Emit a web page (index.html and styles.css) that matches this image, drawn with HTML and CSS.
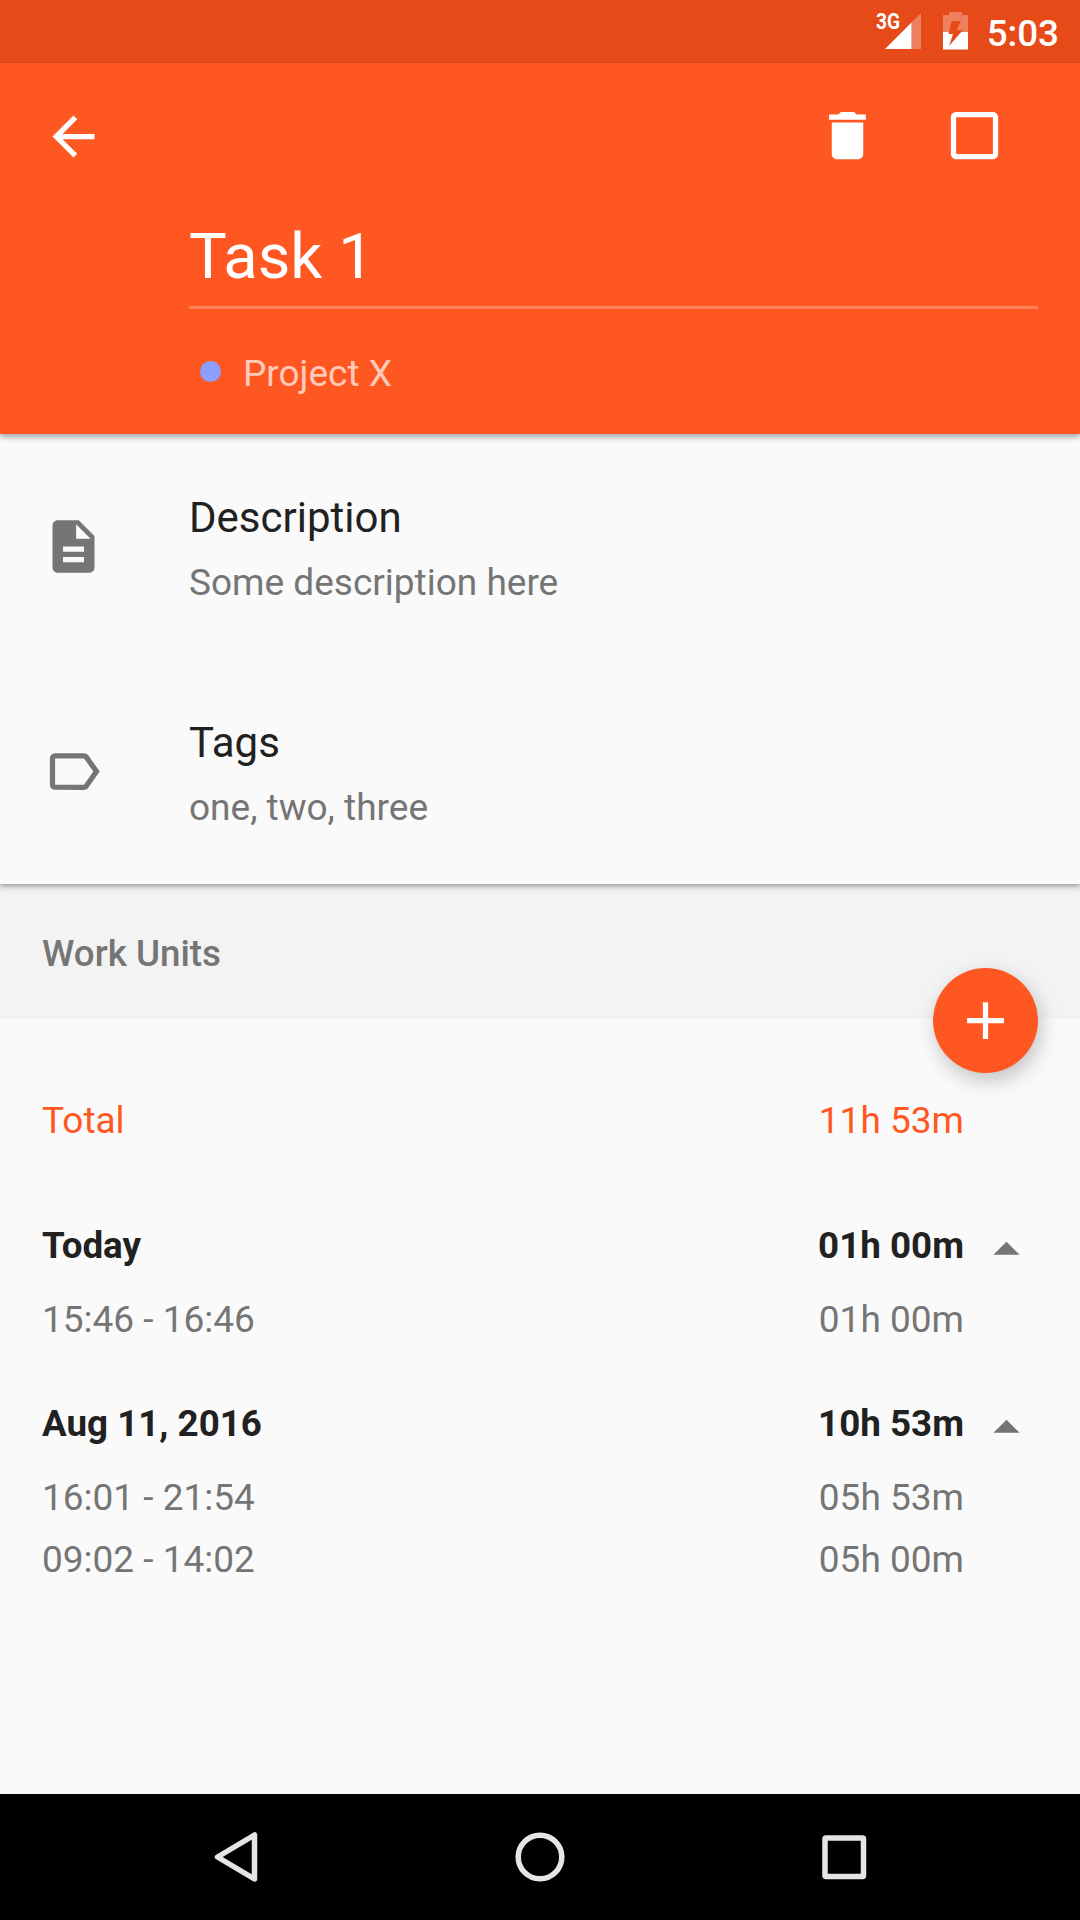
FILE: index.html
```html
<!DOCTYPE html>
<html lang="en">
<head>
  <meta charset="UTF-8" />
  <meta name="viewport" content="width=device-width, initial-scale=1" />
  <title>Task 1</title>
  <link rel="stylesheet" href="styles.css">
</head>
<body>
  <div class="status-bar">
    <div class="signal">
      <span class="network">3G</span>
      <svg width="36" height="36" viewBox="0 0 36 36">
        <path class="dim" d="M26.5 9.5 36 0v36h-9.5z" />
        <path d="M0 36 26.5 9.5V36z" />
      </svg>
    </div>
    <svg class="battery" width="25" height="38" viewBox="0 0 25 38">
      <path class="dim" d="M0 3h6V0h13v3h6v17H0z" />
      <path d="M0 20h25v17.5H0z" />
      <path class="bolt" d="M8.5 9h9.5l-4.5 9H20L6 34l4-12H5.5z" />
    </svg>
    <span class="clock">5:03</span>
  </div>

  <header>
    <div class="toolbar">
      <button class="icon-btn" aria-label="Back">
        <svg class="icon" viewBox="0 0 24 24"><path d="M20 11H7.83l5.59-5.59L12 4l-8 8 8 8 1.41-1.41L7.83 13H20v-2z" /></svg>
      </button>
      <div class="actions">
        <button class="icon-btn" aria-label="Delete">
          <svg class="icon" viewBox="0 0 24 24"><path d="M6 19c0 1.1.9 2 2 2h8c1.1 0 2-.9 2-2V7H6v12zM19 4h-3.5l-1-1h-5l-1 1H5v2h14V4z" /></svg>
        </button>
        <button class="icon-btn" aria-label="Mark as done">
          <svg class="icon" viewBox="0 0 24 24"><path d="M19 5v14H5V5h14m0-2H5c-1.1 0-2 .9-2 2v14c0 1.1.9 2 2 2h14c1.1 0 2-.9 2-2V5c0-1.1-.9-2-2-2z" /></svg>
        </button>
      </div>
    </div>
    <div class="task">
      <h1>Task 1</h1>
      <div class="project"><span class="dot"></span>Project X</div>
    </div>
  </header>

  <section class="details">
    <div class="detail">
      <svg class="icon" viewBox="0 0 24 24"><path d="M14 2H6c-1.1 0-1.99.9-1.99 2L4 20c0 1.1.89 2 1.99 2H18c1.1 0 2-.9 2-2V8l-6-6zm2 16H8v-2h8v2zm0-4H8v-2h8v2zm-3-5V3.5L18.5 9H13z" /></svg>
      <div>
        <h2>Description</h2>
        <p>Some description here</p>
      </div>
    </div>
    <div class="detail">
      <svg class="icon" viewBox="0 0 24 24"><path d="M17.63 5.84C17.27 5.33 16.67 5 16 5L5 5.01C3.9 5.01 3 5.9 3 7v10c0 1.1.9 1.99 2 1.99L16 19c.67 0 1.27-.33 1.63-.84L22 12l-4.37-6.16zM16 17H5V7h11l3.55 5L16 17z" /></svg>
      <div>
        <h2>Tags</h2>
        <p>one, two, three</p>
      </div>
    </div>
  </section>

  <div class="section-header">
    <h3>Work Units</h3>
    <button class="fab" aria-label="Add work unit">
      <svg class="icon" viewBox="0 0 24 24"><path d="M19 13h-6v6h-2v-6H5v-2h6V5h2v6h6v2z" /></svg>
    </button>
  </div>

  <main>
    <div class="row total"><span>Total</span><span>11h 53m</span></div>

    <div class="group">
      <div class="row day">
        <span>Today</span><span>01h 00m</span>
        <svg class="icon" viewBox="0 0 24 24"><path d="M7 14l5-5 5 5z" /></svg>
      </div>
      <div class="row"><span>15:46 - 16:46</span><span>01h 00m</span></div>
    </div>

    <div class="group">
      <div class="row day">
        <span>Aug 11, 2016</span><span>10h 53m</span>
        <svg class="icon" viewBox="0 0 24 24"><path d="M7 14l5-5 5 5z" /></svg>
      </div>
      <div class="row"><span>16:01 - 21:54</span><span>05h 53m</span></div>
      <div class="row"><span>09:02 - 14:02</span><span>05h 00m</span></div>
    </div>
  </main>

  <nav>
    <svg viewBox="0 0 60 60"><path d="M48.5 8v44L11.5 30z" /></svg>
    <svg viewBox="0 0 60 60"><circle cx="30" cy="30" r="21.8" /></svg>
    <svg viewBox="0 0 60 60"><rect x="11" y="11" width="38.5" height="38.5" rx="1" /></svg>
  </nav>
</body>
</html>
```
FILE: styles.css
```css
* {
  box-sizing: border-box;
}

body {
  font-family: Roboto, sans-serif;
  font-size: 37px;
  background: #fafafa;
  color: #757575;
  margin: 0;
  height: 1920px;
  overflow: hidden;
  display: flex;
  flex-direction: column;
}

h1, h2, h3, p {
  margin: 0;
  font-weight: 400;
}

button {
  border: none;
  background: none;
  padding: 0;
  color: inherit;
  display: flex;
  align-items: center;
  justify-content: center;
}

.icon {
  display: block;
  width: 63px;
  height: 63px;
  fill: currentColor;
  flex: none;
}

.status-bar {
  height: 63px;
  background: #e64a19;
  color: #fff;
  fill: #fff;
  display: flex;
  justify-content: flex-end;
  padding-right: 21px;
}

.signal {
  display: flex;
  width: 45px;
  margin-right: 22px;
  padding-top: 13px;
}

.signal svg {
  flex: none;
  margin-left: -14px;
}

.network {
  width: 23px;
  flex: none;
  font-size: 22px;
  line-height: 18px;
  font-weight: 700;
  transform: scaleX(0.87);
  transform-origin: left;
}

.dim {
  opacity: 0.3;
}

.battery {
  margin-top: 12px;
  margin-right: 19px;
}

.bolt {
  fill: #e64a19;
}

.clock {
  font-size: 36.75px;
  font-weight: 500;
  line-height: 67px;
}

header {
  height: 371px;
  background: #ff5722;
  color: #fff;
  box-shadow: 0 3px 6px rgba(0, 0, 0, 0.35);
  z-index: 2;
}

.toolbar {
  height: 147px;
  padding: 0 42px;
  display: flex;
  justify-content: space-between;
}

.actions {
  display: flex;
  padding-bottom: 2px;
}

.actions .icon-btn {
  width: 127px;
}

.task {
  margin-left: 189px;
  margin-right: 42px;
}

h1 {
  font-size: 63.3px;
  line-height: 74px;
  height: 99px;
  padding-top: 9px;
  border-bottom: 3px solid rgba(255, 255, 255, 0.25);
}

.project {
  display: flex;
  align-items: center;
  height: 43px;
  margin-top: 43px;
  padding-left: 11px;
  color: rgba(255, 255, 255, 0.7);
}

.dot {
  width: 21px;
  height: 21px;
  margin-right: 22px;
  margin-bottom: 4px;
  border-radius: 50%;
  background: #8c9eff;
}

.details {
  background: #fafafa;
  box-shadow: 0 2px 6px rgba(0, 0, 0, 0.4);
  z-index: 1;
}

.detail {
  height: 225px;
  padding: 0 42px;
  display: flex;
  align-items: center;
  gap: 84px;
}

h2 {
  font-size: 42px;
  line-height: 49px;
  color: #212121;
}

.detail p {
  line-height: 40px;
  margin-top: 21px;
  margin-bottom: -2px;
}

.section-header {
  position: relative;
  height: 135px;
  background: #f3f3f3;
  padding: 0 42px;
}

h3 {
  font-size: 36.75px;
  line-height: 140px;
  font-weight: 500;
}

/* floats over the header's bottom edge */
.fab {
  position: absolute;
  right: 42px;
  bottom: -54px;
  width: 105px;
  height: 105px;
  border-radius: 50%;
  background: #ff5722;
  color: #fff;
  box-shadow: 3px 8px 20px rgba(0, 0, 0, 0.22);
}

main {
  flex: 1;
  padding: 71px 42px 0;
}

.row {
  display: grid;
  grid-template-columns: 1fr auto 63px;
  column-gap: 11px;
  height: 62px;
  line-height: 62px;
}

.total {
  color: #ff5722;
}

.group {
  margin-top: 45px;
}

.total + .group {
  margin-top: 66px;
}

.day {
  height: 68px;
  font-size: 36.75px;
  line-height: 56px;
  margin-bottom: 3px;
  font-weight: 700;
}

.day span {
  color: #212121;
}

nav {
  height: 126px;
  background: #000;
  display: flex;
  justify-content: center;
  align-items: center;
  gap: 244px;
}

nav svg {
  width: 60px;
  height: 60px;
  fill: none;
  stroke: #e5e5e5;
  stroke-width: 5.5;
  stroke-linejoin: round;
}
```
